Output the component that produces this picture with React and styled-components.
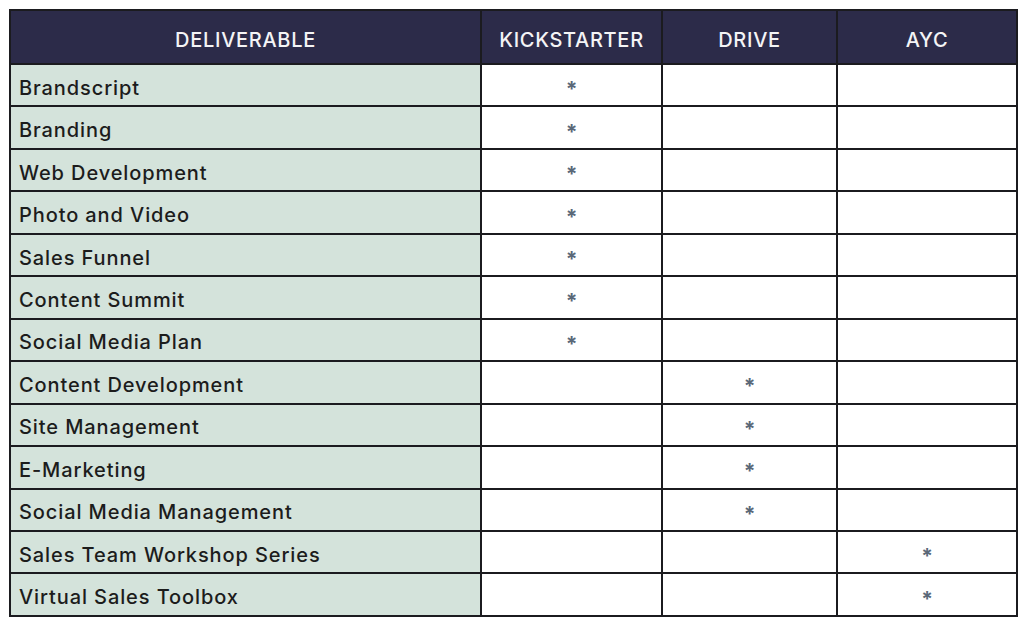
import React from 'react';
import styled, { createGlobalStyle } from 'styled-components';

const GlobalStyle = createGlobalStyle`
  body {
    margin: 0;
    background: #fff;
    font-family: Inter, "Noto Sans", sans-serif;
  }
`;

const rows = [
  ['Brandscript', 0],
  ['Branding', 0],
  ['Web Development', 0],
  ['Photo and Video', 0],
  ['Sales Funnel', 0],
  ['Content Summit', 0],
  ['Social Media Plan', 0],
  ['Content Development', 1],
  ['Site Management', 1],
  ['E-Marketing', 1],
  ['Social Media Management', 1],
  ['Sales Team Workshop Series', 2],
  ['Virtual Sales Toolbox', 2],
];

const plans = ['KICKSTARTER', 'DRIVE', 'AYC'];
const widths = [471, 181, 175, 180];

const App = () => (
  <>
    <GlobalStyle />
    <Page>
      <Table>
        <colgroup>
          {widths.map((w, i) => (
            <Col key={i} $w={w} />
          ))}
        </colgroup>
        <thead>
          <tr>
            <Head>DELIVERABLE</Head>
            {plans.map((p) => (
              <Head key={p}>{p}</Head>
            ))}
          </tr>
        </thead>
        <tbody>
          {rows.map(([name, plan]) => (
            <Row key={name}>
              <Label>{name}</Label>
              {plans.map((p, i) => (
                <Cell key={p}>{i === plan && <Mark>*</Mark>}</Cell>
              ))}
            </Row>
          ))}
        </tbody>
      </Table>
    </Page>
  </>
);

export default App;

const Page = styled.div`
  padding: 9px 6px 0 9px;
`;

const Table = styled.table`
  border-collapse: collapse;
  table-layout: fixed;
  width: 1009px;
  border: 2px solid #1b1b1f;
`;

const Col = styled.col`
  width: ${(p) => p.$w}px;
`;

const Head = styled.th`
  height: 46px;
  padding: 6px 0 0;
  background: #2c2b49;
  color: #f4f4f6;
  font-size: 20px;
  font-weight: 500;
  letter-spacing: 0.7px;
  text-align: center;
  border: 2px solid #1b1b1f;
`;

const Row = styled.tr`
  height: 42.46px;
`;

const Label = styled.td`
  padding: 5px 0 0 8px;
  background: #d4e3db;
  color: #1c1c1c;
  font-size: 20px;
  font-weight: 500;
  letter-spacing: 0.9px;
  border: 2px solid #1b1b1f;
`;

const Cell = styled.td`
  padding: 0;
  background: #fff;
  text-align: center;
  border: 2px solid #1b1b1f;
`;

const Mark = styled.span`
  display: inline-block;
  color: #5a6878;
  font-size: 21px;
  font-weight: 700;
  line-height: 1;
  transform: translateY(5px);
`;
